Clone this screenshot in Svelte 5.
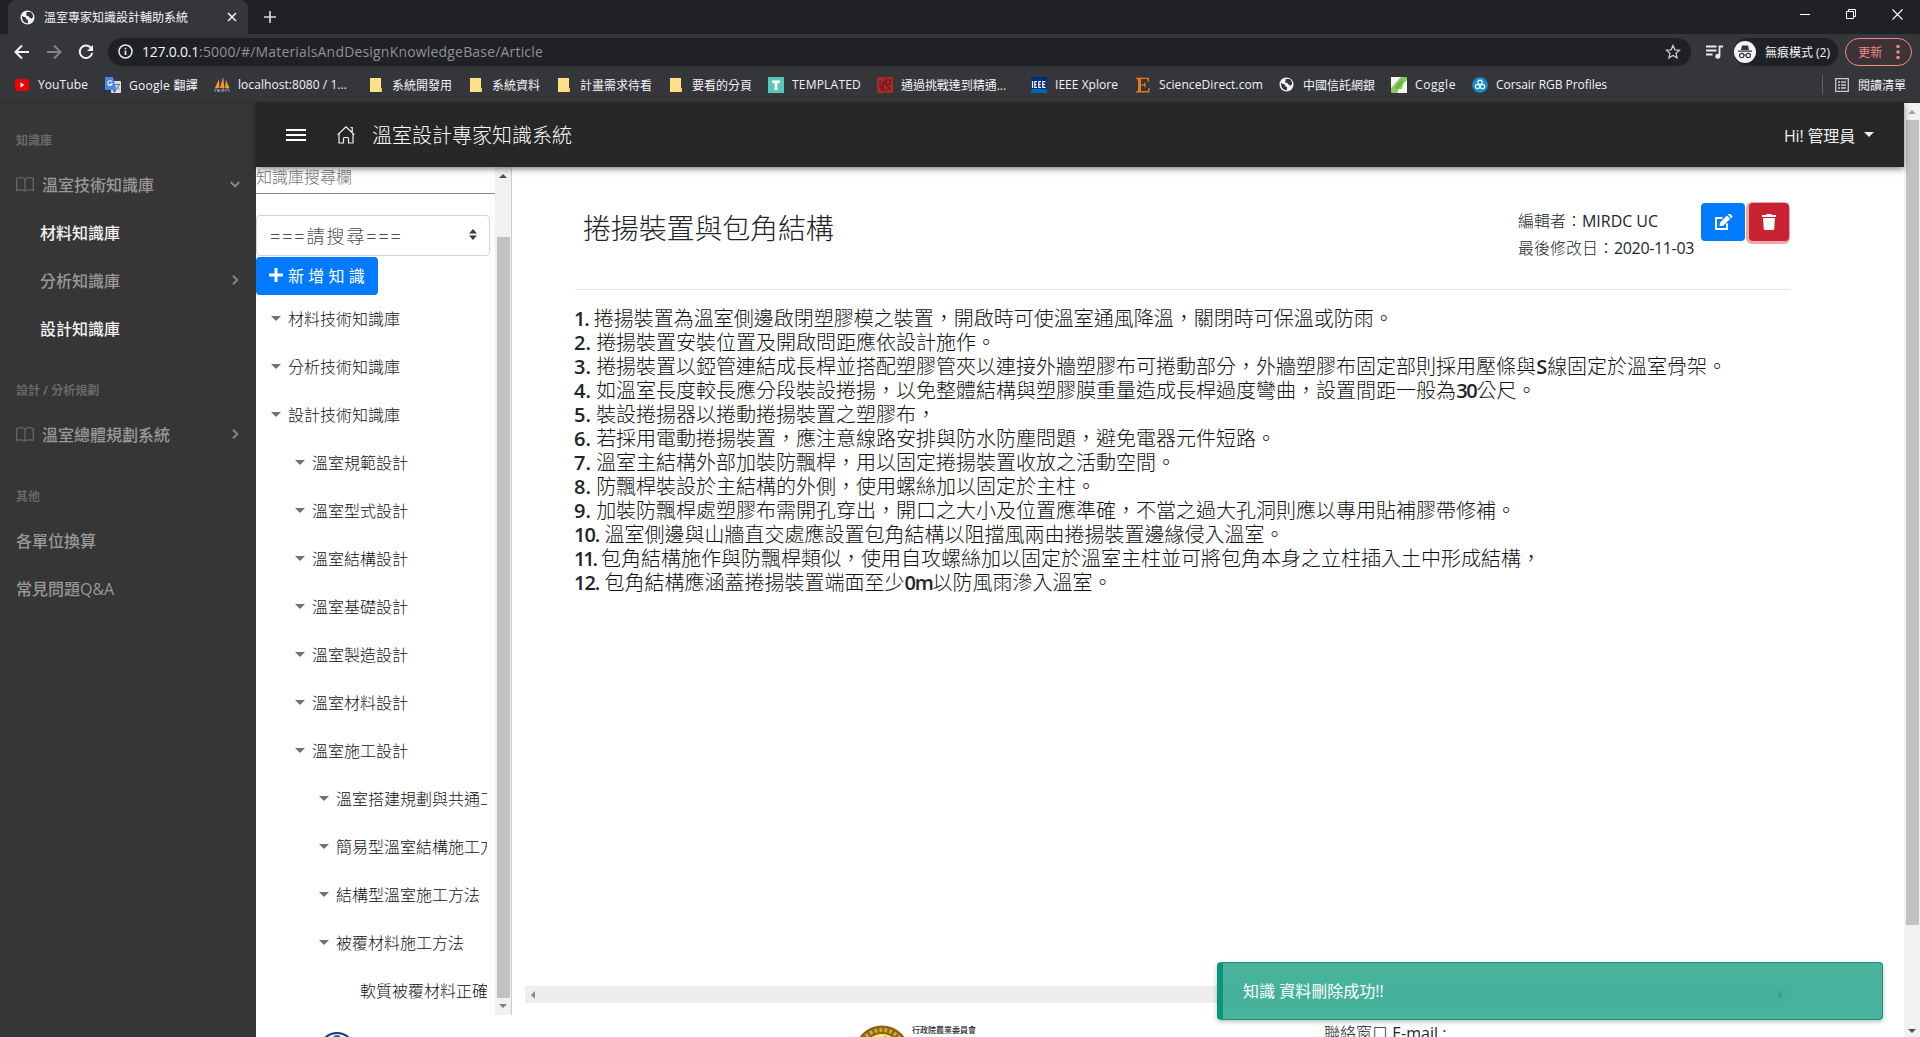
<script>
  const bookmarks = [
    { icon: 'youtube', label: 'YouTube', w: 50, box: 51 },
    { icon: 'translate', label: 'Google 翻譯', w: 69, box: 69 },
    { icon: 'pma', label: 'localhost:8080 / 1...', w: 109, box: 114 },
    { icon: 'folder', label: '系統開發用', w: 60, box: 60 },
    { icon: 'folder', label: '系統資料', w: 48, box: 48 },
    { icon: 'folder', label: '計畫需求待看', w: 72, box: 72 },
    { icon: 'folder', label: '要看的分頁', w: 60, box: 60 },
    { icon: 'templated', label: 'TEMPLATED', w: 69, box: 69 },
    { icon: 'red', label: '通過挑戰達到精通...', w: 105, box: 114 },
    { icon: 'ieee', label: 'IEEE Xplore', w: 63, box: 64 },
    { icon: 'elsevier', label: 'ScienceDirect.com', w: 104, box: 104 },
    { icon: 'globe', label: '中國信託網銀', w: 72, box: 72 },
    { icon: 'coggle', label: 'Coggle', w: 41, box: 41 },
    { icon: 'corsair', label: 'Corsair RGB Profiles', w: 111, box: 112 }
  ];

  const menu = [
    { kind: 'head', label: '知識庫' },
    { kind: 'top', label: '溫室技術知識庫', arrow: 'down' },
    { kind: 'sub', label: '材料知識庫', bright: true },
    { kind: 'sub', label: '分析知識庫', arrow: 'right' },
    { kind: 'sub', label: '設計知識庫', bright: true },
    { kind: 'head', label: '設計 / 分析規劃' },
    { kind: 'top', label: '溫室總體規劃系統', arrow: 'right' },
    { kind: 'head', label: '其他' },
    { kind: 'plain', label: '各單位換算' },
    { kind: 'plain', label: '常見問題Q&A' }
  ];

  const tree = [
    [0, '材料技術知識庫'], [0, '分析技術知識庫'], [0, '設計技術知識庫'],
    [1, '溫室規範設計'], [1, '溫室型式設計'], [1, '溫室結構設計'], [1, '溫室基礎設計'],
    [1, '溫室製造設計'], [1, '溫室材料設計'], [1, '溫室施工設計'],
    [2, '溫室搭建規劃與共通工'], [2, '簡易型溫室結構施工方'],
    [2, '結構型溫室施工方法'], [2, '被覆材料施工方法'], [3, '軟質被覆材料正確']
  ];

  const lines = [
    '捲揚裝置為溫室側邊啟閉塑膠模之裝置，開啟時可使溫室通風降溫，關閉時可保溫或防雨。',
    '捲揚裝置安裝位置及開啟問距應依設計施作。',
    '捲揚裝置以錏管連結成長桿並搭配塑膠管夾以連接外牆塑膠布可捲動部分，外牆塑膠布固定部則採用壓條與S線固定於溫室骨架。',
    '如溫室長度較長應分段裝設捲揚，以免整體結構與塑膠膜重量造成長桿過度彎曲，設置間距一般為30公尺。',
    '裝設捲揚器以捲動捲揚裝置之塑膠布，',
    '若採用電動捲揚裝置，應注意線路安排與防水防塵問題，避免電器元件短路。',
    '溫室主結構外部加裝防飄桿，用以固定捲揚裝置收放之活動空間。',
    '防飄桿裝設於主結構的外側，使用螺絲加以固定於主柱。',
    '加裝防飄桿處塑膠布需開孔穿出，開口之大小及位置應準確，不當之過大孔洞則應以專用貼補膠帶修補。',
    '溫室側邊與山牆直交處應設置包角結構以阻擋風兩由捲揚裝置邊緣侵入溫室。',
    '包角結構施作與防飄桿類似，使用自攻螺絲加以固定於溫室主柱並可將包角本身之立柱插入土中形成結構，',
    '包角結構應涵蓋捲揚裝置端面至少0m以防風雨滲入溫室。'
  ];

  // Separates Latin runs from CJK runs, so that each takes its own weight.
  const runs = (text) => text.split(/([\x21-\x7e]+)/).filter(Boolean);
  const isLatin = (run) => /^[\x21-\x7e]+$/.test(run);

  // Spreads the letters of an inline element so that it takes the given width.
  function fit(node, width) {
    const count = [...node.textContent].length;
    const natural = node.getBoundingClientRect().width;
    node.style.letterSpacing = `${(width - natural) / count}px`;
  }
</script>

{#snippet globe(size)}
  <svg width={size} height={size} viewBox="0 0 16 16">
    <circle cx="8" cy="8" r="7.5" fill="#f1f3f4" />
    <path d="M2 6.5l4.5 1.8v1.6l2 .7v3.6C4.5 14.5 2 11 2 6.500zM7 2.200l4-.2c2 1 3 3 3 5.300l-1.500 2-2.500-1.300-1-1.700-2.300-.3z" fill="#35363a" />
  </svg>
{/snippet}

{#snippet mark(kind)}
  {#if kind === 'globe'}
    {@render globe(15)}
  {:else}
    <svg width="16" height="16" viewBox="0 0 16 16">
      {#if kind === 'youtube'}
        <rect x="1" y="2" width="14" height="12" rx="3" fill="#f00000" />
        <path d="M6.500 5.500v5l4-2.500z" fill="#fff" />
      {:else if kind === 'translate'}
        <rect x="6" y="4" width="10" height="12" rx="1" fill="#dcdfe3" />
        <path d="M1 0h7l3.500 13H1a1 1 0 0 1-1-1V1a1 1 0 0 1 1-1z" fill="#4a86e8" />
        <path d="M7 4.800A2.300 2.300 0 1 0 7.200 7H5" fill="none" stroke="#fff" stroke-width="1.100" />
        <path d="M10 7.500h5M12.500 6.500v1M14 8c-.5 2-1.500 3.500-3 4.500M11.500 9.500l2.500 3" stroke="#69737d" fill="none" />
        <path d="M8 13h3.500L9 16z" fill="#3367d6" />
      {:else if kind === 'pma'}
        <path d="M1 11l4-9 .5 9zM6 11l3-11 1.500 11zM11 11l1-8 3.500 8z" fill="#f0973a" />
        <path d="M1 15v-3h2l1 3 1-3 1 3M8 15v-3h2v2H8M12 15v-3h3v3" fill="none" stroke="#8b91a8" />
      {:else if kind === 'folder'}
        <path d="M2 1h11v10l1 1v3H2z" fill="#ffe08a" />
        <path d="M13 10l1 2v3h-3z" fill="#f7cf62" />
      {:else if kind === 'templated'}
        <rect width="16" height="16" fill="#5ac8b8" />
        <path d="M4 3.500h8v2.500H9.500V13h-3V6H4z" fill="#fff" />
      {:else if kind === 'red'}
        <rect width="16" height="16" rx="1" fill="#a52a2a" />
        <path d="M3 3v6l3 3V4M6 8l3-5v6M9 3h4v4l-3 1 3 5M3 13h8" fill="none" stroke="#6d1717" stroke-width="1.200" />
      {:else if kind === 'ieee'}
        <rect width="16" height="16" fill="#002f7a" />
        <rect y="12" width="16" height="4" fill="#0067a5" />
        <path d="M1.500 4v7M6 4.600H3.800v5.800H6M3.800 7.500h2M10 4.600H7.800v5.800H10M7.800 7.500h2M14.500 4.600h-2.700v5.800h2.700M11.800 7.500h2.400" fill="none" stroke="#fff" stroke-width="1.200" />
      {:else if kind === 'elsevier'}
        <path d="M1 .8h13v4h-1L12 2H6v5.300h3l.7-1.800h.8v5h-.8L9 8.500H6V14h6.500l1.300-3h1l-.5 4.500H1v-1l2-.5V2.500L1 1.800z" fill="#e57b1d" />
      {:else if kind === 'coggle'}
        <rect width="16" height="16" rx="1" fill="#8cc665" />
        <path d="M0 0h10L0 11zM16 3v13H6l2-4 3 0 1-5z" fill="#f3f7ee" />
        <path d="M5 9l4-5 3-1-1 5-4 4H4z" fill="#6fb545" />
      {:else if kind === 'corsair'}
        <circle cx="8" cy="8" r="7.800" fill="#168fd0" />
        <g fill="none" stroke="#fff" stroke-width="1.200">
          <circle cx="8" cy="5.300" r="2.200" /><circle cx="5.600" cy="9.500" r="2.200" /><circle cx="10.400" cy="9.500" r="2.200" />
        </g>
      {/if}
    </svg>
  {/if}
{/snippet}

{#snippet mixed(text)}{#each runs(text) as run}{#if isLatin(run)}<b class="latin" class:tight={run.length > 1}>{run}</b>{:else}{run}{/if}{/each}{/snippet}

{#snippet caret(cls)}<svg class={cls} width="10" height="5" viewBox="0 0 10 5"><path d="M0 0h10L5 5z" fill="currentColor" /></svg>{/snippet}

<div class="screen">
  <div class="tabs">
    <div class="tab">
      {@render globe(15)}
      <span class="tabtitle">溫室專家知識設計輔助系統</span>
      <svg width="10" height="10" viewBox="0 0 10 10"><path d="M1 1l8 8M9 1l-8 8" stroke="#e8eaed" stroke-width="1.700" /></svg>
    </div>
    <svg class="newtab" width="12" height="12" viewBox="0 0 12 12"><path d="M6 0v12M0 6h12" stroke="#d5d7da" stroke-width="1.700" /></svg>
    <div class="window">
      <svg width="10" height="10" viewBox="0 0 10 10"><path d="M0 5.500h10" stroke="#fff" /></svg>
      <svg width="10" height="10" viewBox="0 0 10 10"><path d="M.5 2.500h7v7h-7zM2.500 2.500v-2h7v7h-2" fill="none" stroke="#fff" /></svg>
      <svg width="11" height="11" viewBox="0 0 11 11"><path d="M.5.5l10 10M10.500.5l-10 10" stroke="#fff" stroke-width="1.100" /></svg>
    </div>
  </div>

  <div class="toolbar">
    <svg width="16" height="16" viewBox="0 0 16 16"><path d="M15 8H2M8 1.500L1.500 8 8 14.500" fill="none" stroke="#f1f3f4" stroke-width="2" /></svg>
    <svg width="16" height="16" viewBox="0 0 16 16"><path d="M1 8h13M8 1.500L14.500 8 8 14.500" fill="none" stroke="#818386" stroke-width="2" /></svg>
    <svg width="16" height="16" viewBox="0 0 16 16"><path d="M13.300 4.300A6.300 6.300 0 1 0 14.200 9" fill="none" stroke="#f1f3f4" stroke-width="2" /><path d="M15 1v6H9z" fill="#f1f3f4" /></svg>
    <div class="omnibox">
      <svg width="15" height="15" viewBox="0 0 15 15"><circle cx="7.500" cy="7.500" r="6.500" fill="none" stroke="#e8eaed" stroke-width="1.500" /><path d="M7.500 6.500V11M7.500 3.700v1.500" stroke="#e8eaed" stroke-width="1.700" /></svg>
      <div class="url"><span class="host" use:fit={57}>127.0.0.1</span><span use:fit={344}>:5000/#/MaterialsAndDesignKnowledgeBase/Article</span></div>
      <svg class="star" width="16" height="16" viewBox="0 0 16 16"><path d="M8 1.500l1.900 4.300 4.700.4-3.600 3.100 1.100 4.600L8 11.500l-4.100 2.400L5 9.300 1.400 6.200l4.700-.4z" fill="none" stroke="#c8cacd" stroke-width="1.300" /></svg>
    </div>
    <svg width="17" height="14" viewBox="0 0 17 14"><path d="M0 1.500h10.500M0 5.500h10.500M0 9.500h6.500M13.500 11V1.500h3.500" fill="none" stroke="#e8eaed" stroke-width="1.800" /><circle cx="11.800" cy="11.200" r="2.500" fill="#e8eaed" /></svg>
    <div class="incognito">
      <svg width="22" height="22" viewBox="0 0 22 22"><circle cx="11" cy="11" r="11" fill="#f1f3f4" /><path d="M7 9l1-4.500h6L15 9zM4 9.500h14v1.200H4z" fill="#35363a" /><g fill="none" stroke="#35363a" stroke-width="1.200"><circle cx="7.700" cy="14.500" r="2.200" /><circle cx="14.300" cy="14.500" r="2.200" /><path d="M10 14h2" /></g></svg>
      <span use:fit={65}>無痕模式 (2)</span>
    </div>
    <div class="update"><span>更新</span><svg width="4" height="16" viewBox="0 0 4 16"><path d="M.5 1h3v3h-3zM.5 6.500h3v3h-3zM.5 12h3v3h-3z" fill="#f28b82" /></svg></div>
  </div>

  <div class="bookmarks">
    {#each bookmarks as b}
      <div class="bookmark">
        <div class="mark">{@render mark(b.icon)}</div>
        <div class="label" style="width:{b.box}px"><span use:fit={b.w}>{b.label}</span></div>
      </div>
    {/each}
    <div class="reading">
      <svg width="14" height="14" viewBox="0 0 14 14"><path d="M.7.7h12.600v12.600H.7z" fill="none" stroke="#c8cacd" stroke-width="1.300" /><path d="M3 4h2M6 4h5M3 7h2M6 7h5M3 10h2M6 10h5" stroke="#c8cacd" stroke-width="1.300" /></svg>
      <span>閱讀清單</span>
    </div>
  </div>

  <div class="page">
    <nav class="sidebar">
      {#each menu as m}
        <div class="item {m.kind}" class:bright={m.bright}>
          {#if m.kind === 'top'}
            <svg class="book" width="18" height="15" viewBox="0 0 18 15"><path d="M9 2C7 .3 3 .3.700 1.500v12C3 12.500 7 12.500 9 14c2-1.500 6-1.500 8.300-.5v-12C15 .3 11 .3 9 2zM9 2v12" fill="none" stroke="#686868" stroke-width="1.300" /></svg>
          {/if}
          <span>{m.label}</span>
          {#if m.arrow}
            <svg class="arrow" class:down={m.arrow === 'down'} width="10" height="10" viewBox="0 0 10 10"><path d="M3 .7L7.300 5 3 9.300" fill="none" stroke="#858585" stroke-width="2" /></svg>
          {/if}
        </div>
      {/each}
    </nav>

    <div class="main">
      <header>
        <svg width="20" height="12" viewBox="0 0 20 12"><path d="M0 1h20M0 6h20M0 11h20" stroke="#fff" stroke-width="2" /></svg>
        <svg class="home" width="18" height="18" viewBox="0 0 18 18"><path d="M.7 8.700L9 .9l8.300 7.800M2 7.500V17h4.500v-4.500a1 1 0 0 1 1-1h3a1 1 0 0 1 1 1V17H16V7.500M13.500 1.500h1.700V6" fill="none" stroke="#eee" stroke-width="1.200" /></svg>
        <h1>溫室設計專家知識系統</h1>
        <div class="user"><span use:fit={71}>Hi! 管理員</span>{@render caret('')}</div>
      </header>

      <div class="work">
        <aside>
          <div class="panel">
            <div class="search">知識庫搜尋欄</div>
            <div class="select">
              <span>===請搜尋===</span>
              <svg width="8" height="11" viewBox="0 0 8 11"><path d="M4 0l4 4.500H0zM4 11l4-4.500H0z" fill="#343a40" /></svg>
            </div>
            <button class="add"><svg width="14" height="14" viewBox="0 0 14 14"><path d="M7 0v14M0 7h14" stroke="#fff" stroke-width="3" /></svg><span>新增知識</span></button>
            {#each tree as [level, label]}
              <div class="node level{level}">
                {#if level < 3}{@render caret('fold')}{/if}
                <span>{label}</span>
              </div>
            {/each}
          </div>
          <div class="bar side"><i class="tri up"></i><div class="thumb"></div><i class="tri dn"></i></div>
        </aside>

        <article>
          <div class="head">
            <h2>捲揚裝置與包角結構</h2>
            <div class="meta">
              <div>編輯者：<b class="latin" use:fit={76}>MIRDC UC</b></div>
              <div>最後修改日：<b class="latin" use:fit={80}>2020-11-03</b></div>
            </div>
            <button class="edit"><svg width="19" height="17" viewBox="0 0 19 17"><path d="M13 9.500V15H2V4h6.500" fill="none" stroke="#fff" stroke-width="2" /><path d="M6 8.500l7-7 3.300 3.300-7 7L5.500 12.300zM14 .6l.6-.5a1.200 1.200 0 0 1 1.700 0L18 1.800a1.200 1.200 0 0 1 0 1.700l-.8.700z" fill="#fff" /></svg></button>
            <button class="trash"><svg width="14" height="16" viewBox="0 0 14 16"><path d="M0 1h4l1-1h4l1 1h4v2H0zM1 4h12l-.8 11a1 1 0 0 1-1 1H2.800a1 1 0 0 1-1-1z" fill="#fff" /></svg></button>
          </div>
          <div class="text">
            {#each lines as line, i}
              <p><b class="latin num n{i + 1}">{i + 1}.</b> {@render mixed(line)}</p>
            {/each}
          </div>
          <div class="hbar"><i class="tri lf"></i><i class="tri rt"></i></div>
        </article>
      </div>

      <footer>
        <svg class="ring" width="36" height="20" viewBox="0 0 36 20"><circle cx="18" cy="18" r="17" fill="#fff" stroke="#1d3f7c" stroke-width="2" /><circle cx="18" cy="7" r="4" fill="#1c5bb5" /></svg>
        <svg class="seal" width="56" height="20" viewBox="0 0 56 20"><circle cx="28" cy="28" r="27.500" fill="#8a6414" /><circle cx="28" cy="28" r="23" fill="none" stroke="#d8a92f" stroke-width="4" stroke-dasharray="3 2" /><circle cx="28" cy="28" r="19" fill="#f7ec74" /><path d="M24 17q5-2 8-6M26 16l5 3" stroke="#54702a" fill="none" /></svg>
        <span class="council">行政院農業委員會</span>
        <span class="contact">聯絡窗口 <b class="latin">E-mail :</b></span>
      </footer>
    </div>

    <div class="bar outer"><i class="tri up"></i><div class="thumb"></div><i class="tri dn"></i></div>
  </div>

  <div class="toast"><span>知識 資料刪除成功!!</span></div>
</div>

<style>
  :global(body) { margin: 0; overflow: hidden; }
  .screen {
    position: relative; width: 1920px; height: 1037px; overflow: hidden; background: #fff;
    font-family: "Open Sans", "Noto Sans CJK TC", sans-serif; color: #212529;
    display: flex; flex-direction: column;
  }
  .screen * { box-sizing: border-box; }
  svg { display: block; flex: none; }
  span, b { white-space: nowrap; }
  button { border: 0; padding: 0; font: inherit; color: #fff; display: flex; align-items: center; justify-content: center; }

  .tabs { height: 34px; flex: none; background: #202124; display: flex; align-items: center; padding-left: 8px; }
  .tab { width: 240px; height: 34px; background: #35363a; border-radius: 8px 8px 0 0; display: flex; align-items: center; padding: 0 11px 0 12px; color: #f1f3f4; font-size: 12px; }
  .tabtitle { flex: 1; margin-left: 9px; }
  .newtab { margin-left: 16px; }
  .window { margin: -6px 17px 0 auto; display: flex; align-items: center; gap: 36px; }

  .toolbar { height: 36px; flex: none; background: #35363a; display: flex; align-items: center; padding: 0 8px 1px 14px; gap: 16px; }
  .omnibox { flex: none; width: 1583px; height: 28px; margin-left: -2px; border-radius: 14px; background: #202124; display: flex; align-items: center; padding: 0 10px; }
  .url { margin-left: 9px; font-size: 14px; color: #8f9296; }
  .host { color: #f1f3f4; }
  .star { margin-left: auto; }
  .omnibox + svg { margin-left: -1px; margin-right: -5px; }
  .incognito { width: 105px; height: 28px; border-radius: 14px; background: #202124; display: flex; align-items: center; gap: 9px; color: #f1f3f4; font-size: 12px; }
  .update { margin-left: -9px; width: 67px; height: 28px; border: 1px solid #f28b82; border-radius: 14px; background: #3b3335; display: flex; align-items: center; justify-content: space-between; padding: 0 11px 0 12px; color: #f28b82; font-size: 12px; }

  .bookmarks { height: 33px; flex: none; background: #35363a; border-bottom: 1px solid #2d2c33; display: flex; align-items: center; padding: 0 14px 3px; gap: 16px; font-size: 12px; color: #f1f3f4; }
  .bookmark { display: flex; align-items: center; gap: 8px; height: 28px; }
  .mark { width: 16px; height: 16px; }
  .reading { margin-left: auto; display: flex; align-items: center; gap: 9px; height: 20px; border-left: 1px solid #5f6164; padding-left: 12px; }

  .page { flex: 1; min-height: 0; display: flex; }
  .sidebar { width: 256px; flex: none; background: #363636; font-weight: 500; }
  .item { height: 48px; display: flex; align-items: center; padding: 0 16px 2px; font-size: 16px; color: #989898; }
  .head.item { height: 58px; padding: 16px 16px 0; font-size: 12px; font-weight: 700; color: #696969; }
  .sub.item { padding-left: 40px; }
  .bright.item { color: #f2f2f2; }
  .book { margin-right: 8px; }
  .arrow { margin-left: auto; }
  .down { transform: rotate(90deg); }

  .main { width: 1648px; flex: none; display: flex; flex-direction: column; min-height: 0; }
  header { position: relative; z-index: 2; height: 64px; flex: none; background: #272727; box-shadow: 0 2px 6px rgba(0, 0, 0, .5); display: flex; align-items: center; padding: 0 30px; color: #eee; }
  .home { margin-left: 31px; }
  h1 { margin: 2px 0 0 17px; font-size: 20px; font-weight: 300; line-height: 30px; color: #fff; }
  .user { margin: -1px 0 0 auto; display: flex; align-items: center; gap: 9px; font-size: 16px; }

  .work { height: 848px; flex: none; display: flex; font-weight: 300; }
  aside { width: 256px; display: flex; border-right: 1px solid #ccc; overflow: hidden; flex: none; }
  .panel { width: 239px; flex: none; overflow: hidden; }
  .search { height: 27px; border-bottom: 1px solid #888; font-size: 16px; line-height: 20px; color: #6c757d; }
  .select { margin: 21px 0 1px; width: 234px; height: 41px; border: 1px solid #ced4da; border-radius: 4px; display: flex; align-items: center; justify-content: space-between; padding: 0 12px 2px 13px; font-size: 18px; color: #495057; }
  .select span { white-space: nowrap; letter-spacing: 1.900px; }
  .add { width: 122px; height: 38px; border-radius: 4px; background: #007bff; gap: 5px; font-weight: 400; font-size: 16px; padding-bottom: 2px; }
  .add span { letter-spacing: 4.300px; margin-right: -4px; }
  .node { width: 231px; height: 48px; display: flex; align-items: center; overflow: hidden; font-size: 16px; color: #111; padding: 0 0 2px 15px; }
  .fold { color: #6f6f6f; margin-right: 7px; }
  .level1 { padding-left: 39px; }
  .level2 { padding-left: 63px; }
  .level3 { padding-left: 104px; }

  .bar { background: #f1f1f1; display: flex; flex-direction: column; align-items: center; }
  .tri { width: 0; height: 0; flex: none; border: 4px solid transparent; }
  .up { border-top: 0; border-bottom: 4px solid #7d7d7d; }
  .dn { border-bottom: 0; border-top: 4px solid #7d7d7d; }
  .lf { border-left: 0; border-right: 4px solid #8a8a8a; }
  .rt { border-right: 0; border-left: 4px solid #8a8a8a; }
  .thumb { background: #c1c1c1; flex: none; width: 13px; }
  .side { width: 16px; }
  .side .up { margin-top: 7px; border-bottom-color: #505050; }
  .side .thumb { height: 761px; margin-top: 59px; }
  .side .dn { margin-top: 6px; }
  .outer { width: 16px; flex: none; }
  .outer .up { margin-top: 7px; border-bottom-color: #a3a3a3; }
  .outer .thumb { height: 805px; margin-top: 6px; }
  .outer .dn { margin: auto 0 4px; border-top-color: #505050; }

  article { width: 1279px; padding-left: 13px; display: flex; flex-direction: column; }
  article .head { height: 123px; margin: 0 0 0 50px; width: 1215px; border-bottom: 1px solid #e4e5e6; display: flex; align-items: flex-start; padding-top: 36px; }
  h2 { margin: 4px 0 0 8px; font-size: 28px; line-height: 42px; font-weight: 300; letter-spacing: -.15px; color: #212529; }
  .meta { margin: 5px 3px 0 auto; width: 180px; font-size: 16px; line-height: 27px; white-space: nowrap; }
  .latin { font-weight: 500; }
  .edit { width: 44px; height: 38px; border-radius: 4px; background: #007bff; }
  .trash { width: 40px; height: 38px; margin: 0 1px 0 4px; border-radius: 4px; background: #c82333; box-shadow: -1px 1px 0 2px #f1a5ad; }
  .text { margin: 17px 0 0 49px; width: 1216px; font-size: 20px; color: #111; }
  .text p { margin: 0; height: 24px; line-height: 24px; white-space: nowrap; }
  .text .latin { font-weight: 600; color: #212529; }
  .text .tight { letter-spacing: -1.300px; }
  .num.n1 { letter-spacing: -1.200px; }
  .num.n10, .num.n12 { letter-spacing: -1px; }
  .num.n11 { letter-spacing: -2.200px; }
  .hbar { margin-top: auto; margin-bottom: 12px; width: 1266px; height: 17px; background: #eee; display: flex; align-items: center; justify-content: space-between; padding: 0 8px 0 6px; }

  footer { display: flex; align-items: flex-start; height: 22px; overflow: hidden; }
  .ring { margin: 17px 0 0 63px; }
  .seal { margin: 10px 0 0 499px; }
  .council { margin: 8px 0 0 2px; font-size: 8px; line-height: 14px; font-weight: 500; width: 66px; }
  .contact { margin: 6px 0 0 346px; font-size: 16px; line-height: 24px; font-weight: 300; }

  .toast { position: absolute; z-index: 5; left: 1217px; top: 962px; width: 666px; height: 58px; border: 1px solid #1b8f75; border-left: 6px solid #0b9677; border-radius: 4px; background: rgba(40, 166, 140, .85); box-shadow: 0 2px 5px rgba(0, 0, 0, .25); display: flex; align-items: center; padding: 0 0 2px 20px; color: #fff; font-size: 16px; }
</style>
